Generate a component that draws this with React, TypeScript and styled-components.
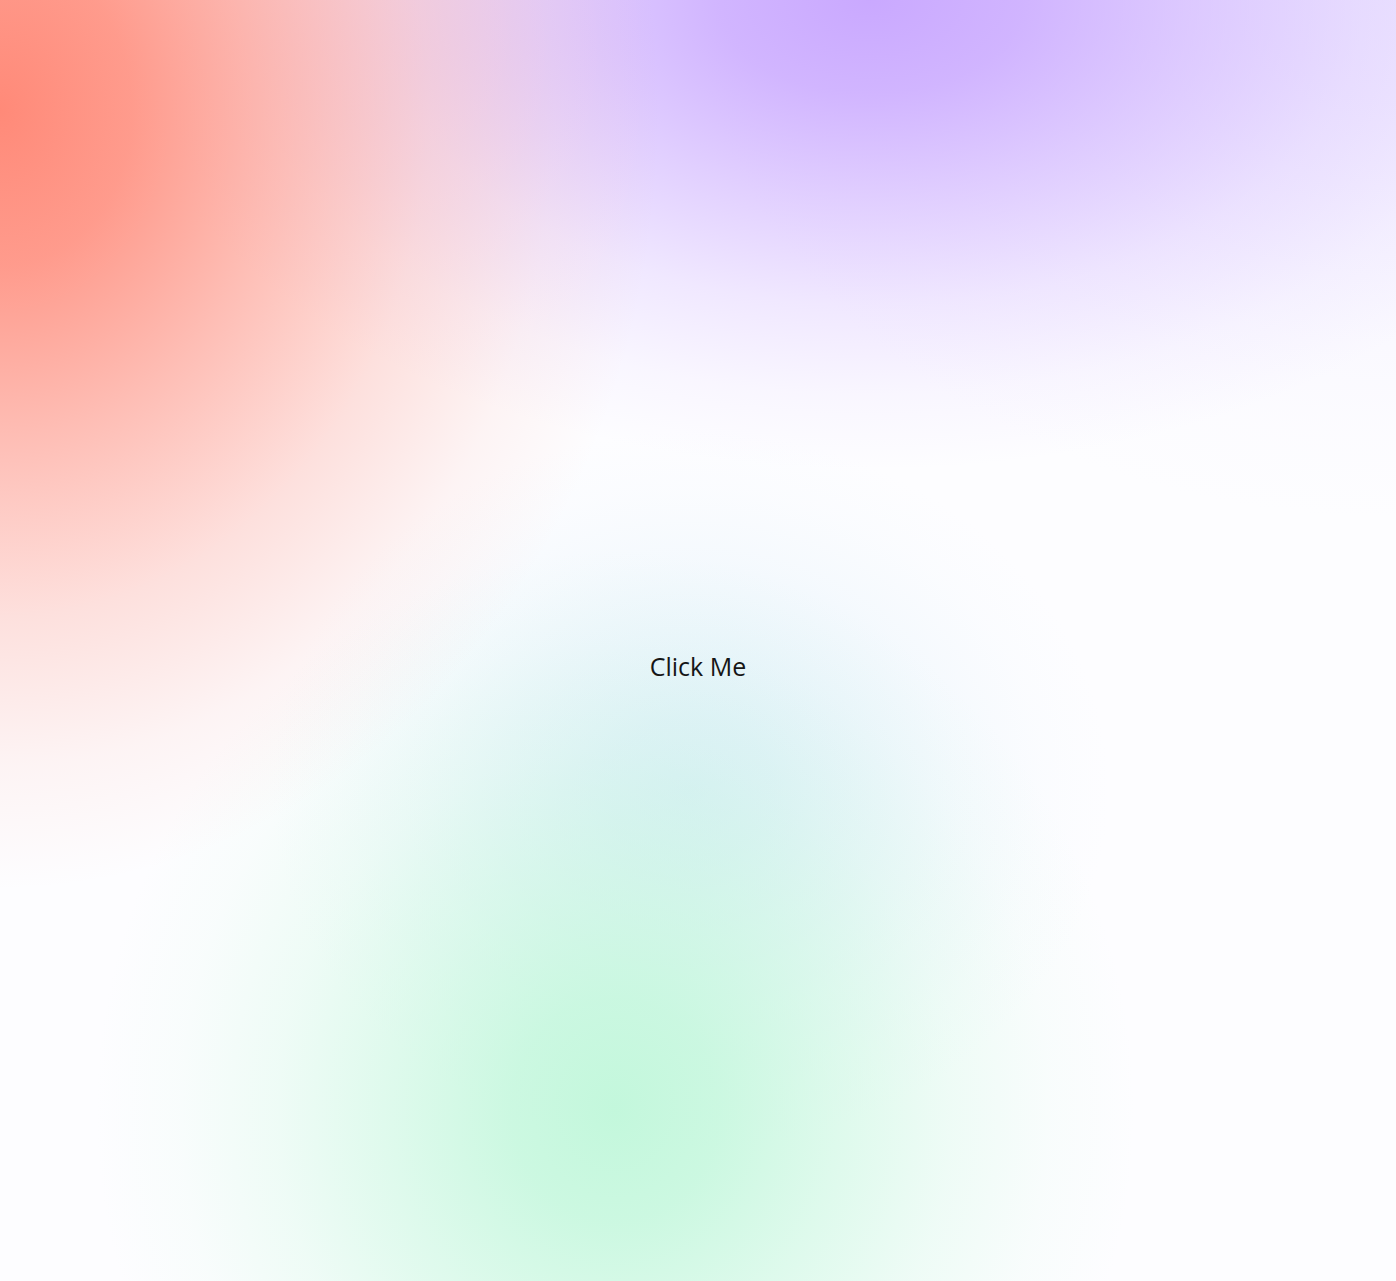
import React from "react";
import styled, { createGlobalStyle } from "styled-components";

const Global = createGlobalStyle`
  html, body { margin: 0; padding: 0; }
  body { background: #fdfdff; }
`;

const blob = (shape: string, rgb: string, a = 1) =>
  `radial-gradient(${shape}, rgba(${rgb}, ${a}) 0%, rgba(${rgb}, ${a * 0.85}) 20%, rgba(${rgb}, ${a * 0.55}) 42%, rgba(${rgb}, ${a * 0.25}) 65%, rgba(${rgb}, ${a * 0.08}) 84%, rgba(${rgb}, 0) 100%)`;

const Canvas = styled.main`
  width: 100vw;
  height: 100vh;
  box-sizing: border-box;
  display: flex;
  align-items: center;
  justify-content: center;
  padding-top: 50px;
  background:
    ${blob("ellipse 660px 780px at 0px 110px", "255, 134, 116", 0.97)},
    ${blob("ellipse 760px 470px at 870px 0px", "200, 166, 255", 0.97)},
    ${blob("ellipse 520px 560px at 615px 1110px", "192, 247, 218", 0.95)},
    ${blob("ellipse 420px 360px at 690px 790px", "214, 236, 248", 0.8)},
    ${blob("ellipse 700px 520px at 1396px 0px", "232, 224, 255", 0.6)},
    #fdfdff;
`;

const Button = styled.button`
  background: transparent;
  border: none;
  padding: 0;
  font-family: "Open Sans", "Noto Sans", sans-serif;
  font-size: 25px;
  color: #161616;
  cursor: pointer;
`;

export default function App() {
  return (
    <>
      <Global />
      <Canvas>
        <Button>Click Me</Button>
      </Canvas>
    </>
  );
}
